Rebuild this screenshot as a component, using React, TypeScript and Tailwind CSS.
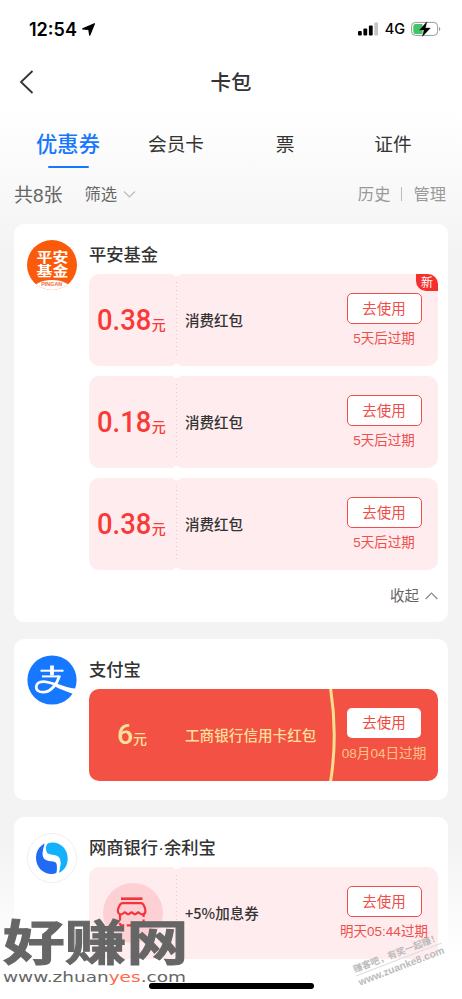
import React from 'react';

type CouponProps = {
    amount?: string;
    name: string;
    expire: string;
    isNew?: boolean;
}

const SignalIcon: React.FC = () => (
    <svg width="20" height="14" viewBox="0 0 20 14">
        <rect x="0" y="9" width="3.8" height="4.4" rx="1" fill="#000" />
        <rect x="5.4" y="6.6" width="3.8" height="6.8" rx="1" fill="#000" />
        <rect x="10.9" y="3.4" width="3.8" height="10" rx="1" fill="#000" />
        <rect x="16.3" y="0.4" width="3.8" height="13" rx="1" fill="#c4c4c4" />
    </svg>
)

const BatteryIcon: React.FC = () => (
    <svg width="30" height="16" viewBox="0 0 30 16">
        <rect x="0.6" y="1.4" width="26" height="13" rx="3.8" fill="#fff" stroke="#9a9a9a" strokeWidth="1" />
        <path d="M4.5 3h7v10h-7a2.2 2.2 0 0 1-2.2-2.2V5.2A2.2 2.2 0 0 1 4.5 3z" fill="#41c567" />
        <path d="M28 5.9c1.7.5 1.7 3.6 0 4.1z" fill="#9a9a9a" />
        <path d="M15.8 0.8 8.600 9h4.400l-1.600 6.500L19.400 7h-4.900z" fill="#000" stroke="#000" strokeWidth="0.3" strokeLinejoin="round" />
    </svg>
)

const PinganLogo: React.FC = () => (
    <div className="relative h-[50px] w-[50px] shrink-0 overflow-hidden rounded-full bg-[#fb5a0a]">
        <div className="flex flex-col items-center pt-[11px] text-[13.500px] font-bold leading-[13.500px] text-white">
            <span className="scale-x-[1.180]">平安</span>
            <span className="scale-x-[1.180]">基金</span>
        </div>
        <div className="absolute -bottom-[12px] left-[5px] flex h-[22px] w-[40px] justify-center rounded-[50%] bg-white pt-[2px]">
            <span className="scale-x-[1.200] text-[4.500px] font-bold leading-[5px] text-[#f26a3c]">PINGAN</span>
        </div>
    </div>
)

const AlipayLogo: React.FC = () => (
    <svg className="shrink-0" width="50" height="50" viewBox="0 0 50 50">
        <circle cx="25" cy="25" r="24.6" fill="#1677ff" />
        <g fill="none" stroke="#fff">
            <path d="M25 10.500v10" strokeWidth="3.800" />
            <path d="M13.500 15.700h23" strokeWidth="2" />
            <path d="M15 21.400h18.500" strokeWidth="2" />
            <path d="M32.400 21c-2 7-8 16.200-16.200 16.200-4.700 0-7-2.200-7-5.200 0-3.200 3-5.400 7-5.400 8.500 0 16 5.700 31.500 8.700" strokeWidth="2.800" />
        </g>
        <path d="M30 30c6 2.500 12 3.600 18.700 3.600l-2.400 5.300C40 37 34 34.500 28 31.500z" fill="#fff" />
    </svg>
)

const MybankLogo: React.FC = () => (
    <svg className="shrink-0" width="50" height="50" viewBox="0 0 50 50">
        <circle cx="25" cy="25" r="24.500" fill="#fff" stroke="#efefef" />
        <path d="M18 10.500C12 13 9 18.500 9 25c0 9 7 16 15.500 16 3 0 5.500-.7 6-3.500.8-4.500.8-7.800-1.500-9.300-3-1.900-9-1.300-11.500-4.500-2-2.800-.8-8 .5-13.200z" fill="#1f6bf5" />
        <path d="M32 39.700c6-2.600 8.700-8 8.700-14.500C40.700 16.500 34 9.500 25.500 9.500c-3.500 0-5.500.7-6.200 3.500-1 4.500-.8 7.600 1.600 9 3 1.900 8.500 1.200 11 4.500 2.200 2.800 1.400 8 .1 13.200z" fill="#13b1fb" />
        <path d="M18.500 10.500c-2 5.500-3.200 12-1 14.800 3 3.200 9.500 1.500 12 4 1.600 2 1.300 6 .8 10.200 2.400-5.500 3.700-12.500.8-15.200-3-2.500-9-1.200-11.500-3.900-1.700-2.300-1.600-6-1.100-9.900z" fill="#fff" stroke="#fff" strokeWidth="1.400" />
    </svg>
)

const ShopIcon: React.FC = () => (
    <svg width="60" height="60" viewBox="0 0 60 60">
        <circle cx="30" cy="30" r="30" fill="#fdd0d4" />
        <g transform="translate(-1 0)" fill="none" stroke="#f5333b" strokeWidth="2.200" strokeLinejoin="round">
            <path d="M19 15.700h21.500" strokeWidth="2.600" />
            <path d="M20.500 20.200h18.500c2.500 0 4.400 5 4.400 7.800 0 2.200-1.600 3.400-3.300 3.400-2 0-2.600-2-3.800-2s-1.800 2-3.400 2-2-2-3.300-2-1.800 2-3.400 2-2-2-3.300-2-1.900 2-3.800 2c-1.700 0-3.200-1.200-3.200-3.400 0-2.800 2.100-7.800 4.600-7.800z" />
            <path d="M18 32v8.500a1.800 1.800 0 0 0 1.800 1.800h20a1.800 1.800 0 0 0 1.800-1.800V32" strokeDasharray="5.500 2.500" />
        </g>
    </svg>
)

const UseButton: React.FC<{ plain?: boolean }> = ({ plain }) => (
    <button
        className={
            plain
                ? 'h-[30px] w-[74px] rounded-[5px] bg-white pt-px text-[14.500px] leading-none text-[#f04a41]'
                : 'h-[31px] w-[75px] rounded-[5px] border-[1.500px] border-[#ee4f4b] bg-white pt-px text-[14.500px] leading-none text-[#ee4f4b]'
        }
    >
        去使用
    </button>
)

const Coupon: React.FC<CouponProps> = ({ amount, name, expire, isNew }) => (
    <div className="relative flex h-[92px] w-[349px] rounded-[10px] bg-[#ffecef]">
        <div className="flex w-[87px] shrink-0 items-center justify-center">
            {amount ? (
                <div className="flex items-baseline pr-[2px] text-[#f93a37]">
                    <span className="-mr-[4px] origin-left scale-x-[0.930] font-[Roboto] text-[29.500px] font-medium leading-[30px]">{amount}</span>
                    <span className="text-[14px] font-medium leading-none">元</span>
                </div>
            ) : (
                <ShopIcon />
            )}
        </div>
        <div className="my-[8px] w-px bg-[repeating-linear-gradient(#f8c3c8_0px,#f8c3c8_1.500px,transparent_1.500px,transparent_4px)]" />
        <span className="absolute -top-[3px] left-[84px] h-[5px] w-[7px] rounded-full bg-white" />
        <span className="absolute -bottom-[3px] left-[84px] h-[5px] w-[7px] rounded-full bg-white" />
        <div className="flex flex-1 items-center pl-[8px] font-['Noto_Sans_CJK_SC'] text-[14.500px] font-medium text-[#333]">{name}</div>
        <div className="flex w-[108px] flex-col items-center pt-[19px]">
            <UseButton />
            <span className="mt-[6px] whitespace-nowrap text-[13.500px] leading-[18px] text-[#ee4f4b]">{expire}</span>
        </div>
        {isNew && (
            <span className="absolute right-0 top-0 flex h-[17px] w-[22px] items-center justify-center rounded-bl-[10px] rounded-tr-[10px] bg-[#f5302c] pt-px text-[12px] leading-none text-white">
                新
            </span>
        )}
    </div>
)

const RedCoupon: React.FC = () => (
    <div className="relative flex h-[92px] w-[349px] overflow-hidden rounded-[10px] bg-[#f25144]">
        <div className="flex w-[86px] shrink-0 items-center justify-center">
            <div className="flex items-baseline text-[#ffe09a]">
                <span className="font-[Roboto] text-[28.500px] font-medium leading-[30px]">6</span>
                <span className="text-[14px] font-medium leading-none">元</span>
            </div>
        </div>
        <div className="flex flex-1 items-center whitespace-nowrap pl-[10px] pt-[3px] text-[14.600px] font-medium text-[#ffdf9c]">工商银行信用卡红包</div>
        <svg className="absolute left-[236px] top-0" width="14" height="92" viewBox="0 0 14 92">
            <path d="M5.500-1Q13 46 5.500 93" fill="none" stroke="#ffdf8c" strokeWidth="3" />
        </svg>
        <div className="flex w-[108px] flex-col items-center pt-[19px]">
            <UseButton plain />
            <span className="mt-[7px] whitespace-nowrap text-[13.600px] leading-[18px] text-[#ffc387]">08月04日过期</span>
        </div>
    </div>
)

const Shop: React.FC<{ logo: React.ReactNode; title: string; className: string; children: React.ReactNode }> = ({ logo, title, className, children }) => (
    <section className={`flex w-[434px] gap-[12px] rounded-[10px] bg-white pl-[13px] pt-[16px] ${className}`}>
        {logo}
        <div className="flex flex-col">
            <h2 className="mb-[9px] h-[25px] text-[17.300px] font-medium leading-[30px] text-[#333]">{title}</h2>
            {children}
        </div>
    </section>
)

const App: React.FC = () => {
    return (
        <main className="relative h-[999px] w-[462px] overflow-hidden bg-[linear-gradient(#fff_0px,#fff_110px,#f3f3f3_255px,#f3f3f3_840px,#fff_960px)] font-['Liberation_Sans','Noto_Sans_CJK_SC',sans-serif]">
            {/* status bar */}
            <header className="flex h-[58px] items-center justify-between pl-[29px] pr-[21px]">
                <div className="flex items-center gap-[5px]">
                    <span className="pt-px font-[Inter] text-[18px] font-semibold leading-none text-black">12:54</span>
                    <svg width="13" height="13" viewBox="0 0 13 13">
                        <path d="M12.400.7 7.700 12.200 6.800 6.500.7 5.900z" fill="#000" stroke="#000" strokeWidth="1.200" strokeLinejoin="round" />
                    </svg>
                </div>
                <div className="flex items-center">
                    <SignalIcon />
                    <span className="ml-[7px] mr-[6px] pt-px font-[Inter] text-[14.500px] font-medium leading-none text-black">4G</span>
                    <BatteryIcon />
                </div>
            </header>
            <nav className="grid h-[50px] grid-cols-3 items-center pl-[19px] pr-[19px]">
                <svg className="-mt-[3px]" width="15" height="24" viewBox="0 0 15 24">
                    <path d="M13.500 1 2 12l11.500 11" fill="none" stroke="#333" strokeWidth="1.800" />
                </svg>
                <h1 className="text-center text-[20.500px] font-medium leading-none text-[#333]">卡包</h1>
            </nav>
            {/* tabs */}
            <div className="flex h-[60px] px-[14px] text-[18.700px] text-[#333]">
                <div className="flex w-[108px] flex-col items-center pt-[23px]">
                    <span className="text-[21.300px] font-medium leading-[28px] text-[#1677ff]">优惠券</span>
                    <span className="mt-[7px] h-[2px] w-[41px] rounded-full bg-[#1677ff]" />
                </div>
                <div className="w-[108px] pt-[23px] text-center leading-[28px]">会员卡</div>
                <div className="w-[110px] pt-[23px] text-center leading-[28px]">票</div>
                <div className="w-[106px] pt-[23px] text-center leading-[28px]">证件</div>
            </div>
            <div className="flex h-[56px] pl-[14px] pr-[16px] pt-[15px] text-[16.300px] leading-[23px] text-[#666]">
                <span className="text-[19px] leading-[25px]">共8张</span>
                <span className="ml-[22px]">筛选</span>
                <svg className="ml-[6px] mt-[7px]" width="13" height="9" viewBox="0 0 13 9">
                    <path d="M1 1.500 6.500 7 12 1.500" fill="none" stroke="#bbb" strokeWidth="1.200" />
                </svg>
                <span className="ml-auto text-[#999]">历史</span>
                <span className="mx-[11px] mt-[4px] h-[14px] w-px bg-[#bbb]" />
                <span className="text-[#999]">管理</span>
            </div>

            <div className="flex flex-col gap-[17px] pl-[14px]">
                <Shop logo={<PinganLogo />} title="平安基金" className="h-[398px]">
                    <div className="flex flex-col gap-[10px]">
                        <Coupon amount="0.38" name="消费红包" expire="5天后过期" isNew />
                        <Coupon amount="0.18" name="消费红包" expire="5天后过期" />
                        <Coupon amount="0.38" name="消费红包" expire="5天后过期" />
                    </div>
                    <div className="mt-[16px] flex items-center justify-end gap-[6px] text-[14.500px] leading-[20px] text-[#666]">
                        收起
                        <svg width="13" height="8" viewBox="0 0 13 8">
                            <path d="M.7 7 6.500 1.200 12.300 7" fill="none" stroke="#888" strokeWidth="1.200" />
                        </svg>
                    </div>
                </Shop>
                <Shop logo={<AlipayLogo />} title="支付宝" className="h-[161px]">
                    <RedCoupon />
                </Shop>
                <Shop logo={<MybankLogo />} title="网商银行·余利宝" className="h-[182px]">
                    <Coupon name="+5%加息券" expire="明天05:44过期" />
                </Shop>
            </div>

            {/* home indicator */}
            <div className="absolute left-[149px] top-[983px] h-[6px] w-[165px] rounded-full bg-black" />

            {/* watermarks */}
            <div className="absolute left-[3px] top-[917px] whitespace-nowrap text-[#666]">
                <div className="origin-left scale-x-[1.300] text-[47.500px] font-bold leading-[53px] [-webkit-text-stroke:1px_#666]">好赚网</div>
                <div className="-mt-[2px] origin-left scale-x-[1.320] font-['DejaVu_Sans'] text-[14px] leading-[18px]">
                    www.zhuan<span className="text-[#ff6a48]">yes</span>.com
                </div>
            </div>
            <div className="absolute left-[352px] top-[947px] flex w-[94px] origin-center -rotate-[21deg] flex-col items-center whitespace-nowrap text-[#bbb]">
                <div className="border-b border-[#ddd] text-[9.200px] font-bold leading-[12px]">赚客吧，有奖一起赚！</div>
                <div className="text-[10.300px] font-bold leading-[13px]">www.zuanke8.com</div>
            </div>
        </main>
    )
}

export default App;
